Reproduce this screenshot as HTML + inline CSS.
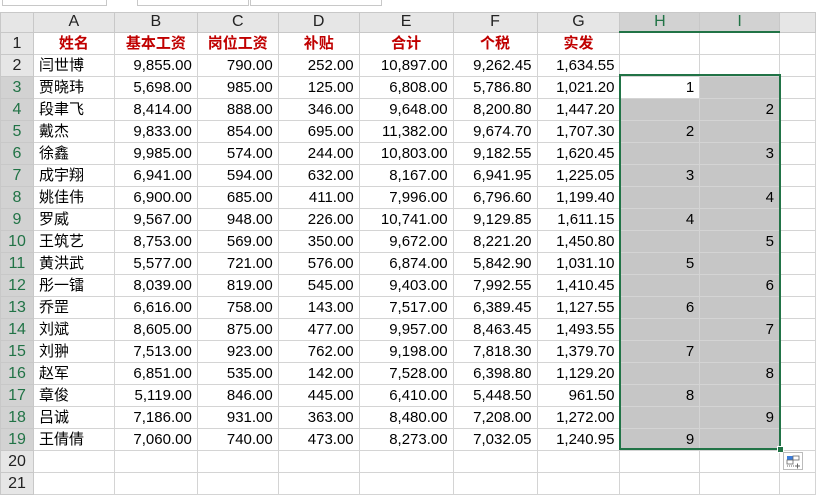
<!DOCTYPE html>
<html><head><meta charset="utf-8"><style>
body{margin:0;width:816px;height:485px;overflow:hidden;background:#fff;font-family:"Liberation Sans","Noto Sans CJK SC",sans-serif;font-size:15px;color:#000;position:relative}
.top{position:absolute;left:0;top:0;width:816px;height:12px;background:#fff;border-bottom:1px solid #d4d4d4}
.top div{position:absolute;top:0;height:5px;border:1px solid #c8c8c8;border-top:none;background:#fff}
table{position:absolute;left:0;top:12px;border-collapse:collapse;table-layout:fixed}
td{height:21px;border:1px solid #d4d4d4;padding:0 5px;white-space:nowrap;overflow:hidden;text-align:right;line-height:21px}
tr.h td{height:18px;background:#e6e6e6;text-align:center;color:#222;border-color:#c8c8c8;line-height:18px;font-size:16px}
td.r{background:#e6e6e6;text-align:center;color:#222;padding:0;border-color:#c8c8c8;font-size:16px}
td.rs{background:#d2d2d2;color:#217346}
tr.h td.cs{background:#d2d2d2;color:#217346;border-bottom:2px solid #217346}
td.l{text-align:left}
td.t{color:#c00000;font-weight:bold;text-align:center}
td.g{background:#c6c6c6}
.sel{position:absolute;left:619px;top:74px;width:158px;height:372px;border:2px solid #217346;pointer-events:none}
.hnd{position:absolute;left:777px;top:446px;width:5px;height:5px;background:#217346;border:1px solid #fff}
.ico{position:absolute;left:783px;top:452px;width:18px;height:16px;border:1px solid #bbb;background:#fff}
</style></head><body>
<div class="top"><div style="left:2px;width:103px"></div><div style="left:137px;width:110px"></div><div style="left:250px;width:130px"></div></div>
<table>
<colgroup><col style="width:33px"><col style="width:81px"><col style="width:83px"><col style="width:81px"><col style="width:81px"><col style="width:94px"><col style="width:84px"><col style="width:83px"><col style="width:80px"><col style="width:80px"><col style="width:36px"></colgroup>
<tr class="h"><td style="background:#e6e6e6"></td><td>A</td><td>B</td><td>C</td><td>D</td><td>E</td><td>F</td><td>G</td><td class="cs">H</td><td class="cs">I</td><td></td></tr>
<tr><td class="r">1</td><td class="t">姓名</td><td class="t">基本工资</td><td class="t">岗位工资</td><td class="t">补贴</td><td class="t">合计</td><td class="t">个税</td><td class="t">实发</td><td></td><td></td><td></td></tr>
<tr><td class="r">2</td><td class="l">闫世博</td><td>9,855.00</td><td>790.00</td><td>252.00</td><td>10,897.00</td><td>9,262.45</td><td>1,634.55</td><td></td><td></td><td></td></tr>
<tr><td class="r rs">3</td><td class="l">贾晓玮</td><td>5,698.00</td><td>985.00</td><td>125.00</td><td>6,808.00</td><td>5,786.80</td><td>1,021.20</td><td>1</td><td class="g"></td><td></td></tr>
<tr><td class="r rs">4</td><td class="l">段聿飞</td><td>8,414.00</td><td>888.00</td><td>346.00</td><td>9,648.00</td><td>8,200.80</td><td>1,447.20</td><td class="g"></td><td class="g">2</td><td></td></tr>
<tr><td class="r rs">5</td><td class="l">戴杰</td><td>9,833.00</td><td>854.00</td><td>695.00</td><td>11,382.00</td><td>9,674.70</td><td>1,707.30</td><td class="g">2</td><td class="g"></td><td></td></tr>
<tr><td class="r rs">6</td><td class="l">徐鑫</td><td>9,985.00</td><td>574.00</td><td>244.00</td><td>10,803.00</td><td>9,182.55</td><td>1,620.45</td><td class="g"></td><td class="g">3</td><td></td></tr>
<tr><td class="r rs">7</td><td class="l">成宇翔</td><td>6,941.00</td><td>594.00</td><td>632.00</td><td>8,167.00</td><td>6,941.95</td><td>1,225.05</td><td class="g">3</td><td class="g"></td><td></td></tr>
<tr><td class="r rs">8</td><td class="l">姚佳伟</td><td>6,900.00</td><td>685.00</td><td>411.00</td><td>7,996.00</td><td>6,796.60</td><td>1,199.40</td><td class="g"></td><td class="g">4</td><td></td></tr>
<tr><td class="r rs">9</td><td class="l">罗威</td><td>9,567.00</td><td>948.00</td><td>226.00</td><td>10,741.00</td><td>9,129.85</td><td>1,611.15</td><td class="g">4</td><td class="g"></td><td></td></tr>
<tr><td class="r rs">10</td><td class="l">王筑艺</td><td>8,753.00</td><td>569.00</td><td>350.00</td><td>9,672.00</td><td>8,221.20</td><td>1,450.80</td><td class="g"></td><td class="g">5</td><td></td></tr>
<tr><td class="r rs">11</td><td class="l">黄洪武</td><td>5,577.00</td><td>721.00</td><td>576.00</td><td>6,874.00</td><td>5,842.90</td><td>1,031.10</td><td class="g">5</td><td class="g"></td><td></td></tr>
<tr><td class="r rs">12</td><td class="l">彤一镭</td><td>8,039.00</td><td>819.00</td><td>545.00</td><td>9,403.00</td><td>7,992.55</td><td>1,410.45</td><td class="g"></td><td class="g">6</td><td></td></tr>
<tr><td class="r rs">13</td><td class="l">乔罡</td><td>6,616.00</td><td>758.00</td><td>143.00</td><td>7,517.00</td><td>6,389.45</td><td>1,127.55</td><td class="g">6</td><td class="g"></td><td></td></tr>
<tr><td class="r rs">14</td><td class="l">刘斌</td><td>8,605.00</td><td>875.00</td><td>477.00</td><td>9,957.00</td><td>8,463.45</td><td>1,493.55</td><td class="g"></td><td class="g">7</td><td></td></tr>
<tr><td class="r rs">15</td><td class="l">刘翀</td><td>7,513.00</td><td>923.00</td><td>762.00</td><td>9,198.00</td><td>7,818.30</td><td>1,379.70</td><td class="g">7</td><td class="g"></td><td></td></tr>
<tr><td class="r rs">16</td><td class="l">赵军</td><td>6,851.00</td><td>535.00</td><td>142.00</td><td>7,528.00</td><td>6,398.80</td><td>1,129.20</td><td class="g"></td><td class="g">8</td><td></td></tr>
<tr><td class="r rs">17</td><td class="l">章俊</td><td>5,119.00</td><td>846.00</td><td>445.00</td><td>6,410.00</td><td>5,448.50</td><td>961.50</td><td class="g">8</td><td class="g"></td><td></td></tr>
<tr><td class="r rs">18</td><td class="l">吕诚</td><td>7,186.00</td><td>931.00</td><td>363.00</td><td>8,480.00</td><td>7,208.00</td><td>1,272.00</td><td class="g"></td><td class="g">9</td><td></td></tr>
<tr><td class="r rs">19</td><td class="l">王倩倩</td><td>7,060.00</td><td>740.00</td><td>473.00</td><td>8,273.00</td><td>7,032.05</td><td>1,240.95</td><td class="g">9</td><td class="g"></td><td></td></tr>
<tr><td class="r">20</td><td></td><td></td><td></td><td></td><td></td><td></td><td></td><td></td><td></td><td></td></tr>
<tr><td class="r">21</td><td></td><td></td><td></td><td></td><td></td><td></td><td></td><td></td><td></td><td></td></tr>
</table>
<div class="sel"></div><div class="hnd"></div>
<div class="ico"><svg width="18" height="16"><rect x="3" y="3" width="6" height="4" fill="#3b7ddd"/><rect x="9" y="3" width="6" height="4" fill="none" stroke="#666" stroke-width="0.8"/><rect x="3" y="7" width="6" height="4" fill="none" stroke="#666" stroke-width="0.8"/><path d="M3 13h7" stroke="#666" stroke-dasharray="1 1"/><path d="M11 13h5M13.5 10.5v5" stroke="#666"/></svg></div>
</body></html>
